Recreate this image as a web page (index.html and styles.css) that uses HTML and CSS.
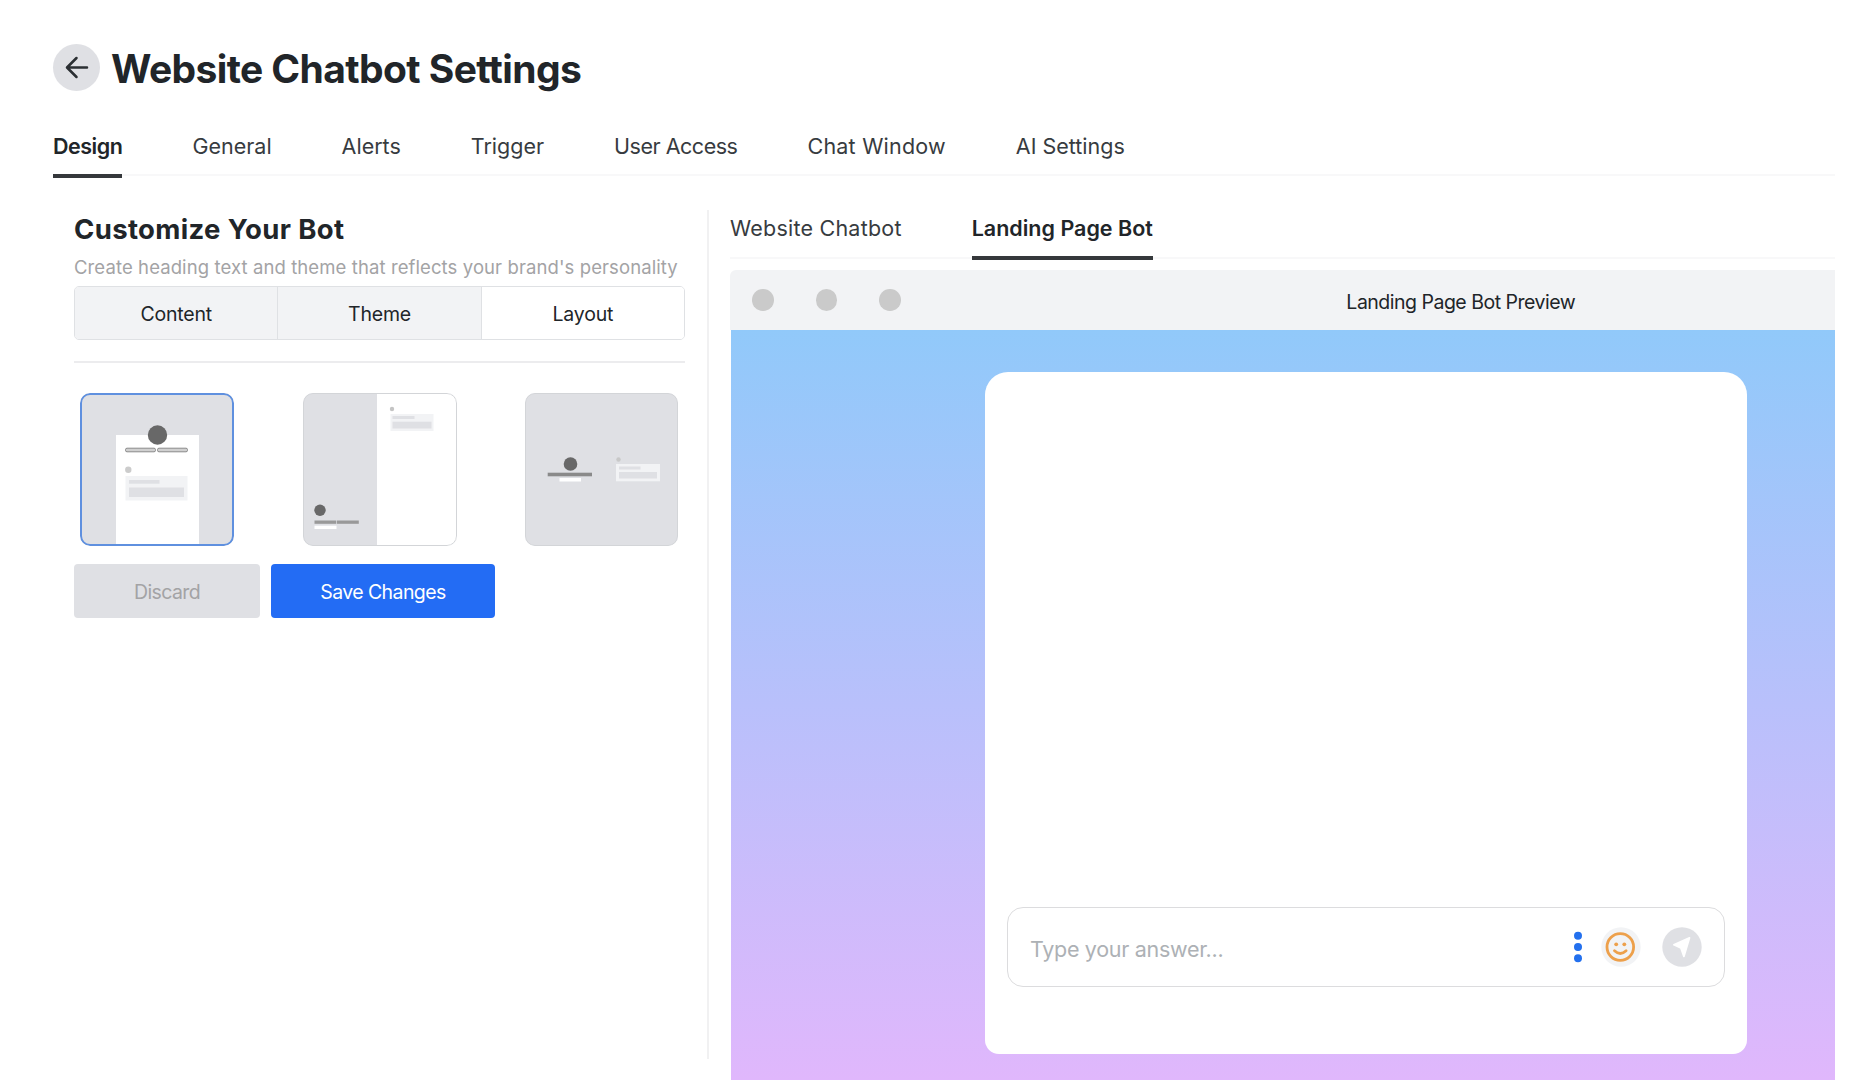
FILE: index.html
```
<!DOCTYPE html>
<html lang="en">
<head>
    <meta charset="UTF-8">
    <title>Website Chatbot Settings</title>
    <link rel="stylesheet" href="styles.css">
</head>
<body>
    <div class="page">
        <header class="header">
            <button type="button" class="back-btn" aria-label="Back">
                <svg width="24" height="24" viewBox="0 0 24 24">
                    <path d="M22 11.500H2.500M11.500 2L2 11.500l9.500 9.500" fill="none" stroke="#2b2f33" stroke-width="2.500" stroke-linecap="round" stroke-linejoin="round"/>
                </svg>
            </button>
            <h1>Website Chatbot Settings</h1>
        </header>

        <nav class="tabs">
            <a class="tab tight active">Design</a>
            <a class="tab">General</a>
            <a class="tab">Alerts</a>
            <a class="tab">Trigger</a>
            <a class="tab tight">User Access</a>
            <a class="tab wide">Chat Window</a>
            <a class="tab">AI Settings</a>
        </nav>

        <main class="content">
            <section class="customize">
                <h2>Customize Your Bot</h2>
                <p class="subtitle">Create heading text and theme that reflects your brand's personality</p>
                <div class="segments">
                    <button type="button" class="segment">Content</button>
                    <button type="button" class="segment">Theme</button>
                    <button type="button" class="segment selected">Layout</button>
                </div>
                <hr>
                <div class="layouts">
                    <!-- centered card layout -->
                    <div class="layout selected">
                        <svg width="154" height="153" viewBox="0 0 154 153">
                            <rect x="36" y="42" width="83" height="110" fill="#fff"/>
                            <circle cx="77.500" cy="42" r="9.700" fill="#686868"/>
                            <rect x="45.500" y="55.200" width="30" height="3.600" rx="1.500" fill="#d0d0d0" stroke="#8a8a8a"/>
                            <rect x="77.500" y="55.200" width="30" height="3.600" rx="1.500" fill="#d0d0d0" stroke="#8a8a8a"/>
                            <circle cx="48.300" cy="76.700" r="3.200" fill="#ccc"/>
                            <rect x="45.500" y="83" width="62" height="24.500" fill="#f2f3f5"/>
                            <rect x="49" y="87" width="30.500" height="3.700" fill="#dfe0e4"/>
                            <rect x="49" y="94.500" width="55" height="9.500" fill="#dfe0e4"/>
                        </svg>
                    </div>
                    <!-- split layout -->
                    <div class="layout">
                        <svg width="154" height="153" viewBox="0 0 154 153">
                            <rect x="74" y="0" width="80" height="153" fill="#fff"/>
                            <circle cx="17" cy="117.300" r="5.700" fill="#686868"/>
                            <rect x="11.500" y="127.500" width="21.800" height="3.300" fill="#999"/>
                            <rect x="34" y="127.500" width="21.800" height="3.300" fill="#999"/>
                            <rect x="11.500" y="132.700" width="22" height="3.300" fill="#fff"/>
                            <circle cx="89" cy="16" r="2.200" fill="#c4c4c4"/>
                            <rect x="87.500" y="21" width="43" height="17" fill="#f2f3f5"/>
                            <rect x="89.500" y="23" width="22" height="3" fill="#dfe0e4"/>
                            <rect x="89.500" y="28.700" width="39" height="6.800" fill="#dfe0e4"/>
                        </svg>
                    </div>
                    <!-- open layout -->
                    <div class="layout layout-open">
                        <svg width="154" height="153" viewBox="0 0 154 153">
                            <circle cx="45.500" cy="71" r="6.800" fill="#686868"/>
                            <rect x="22.700" y="79.700" width="44.300" height="3.600" fill="#8a8a8a"/>
                            <rect x="34.500" y="85" width="21.500" height="3.500" fill="#fff"/>
                            <circle cx="93.500" cy="66.500" r="2.200" fill="#c8c8c8"/>
                            <rect x="91" y="71" width="44" height="17.300" fill="#f2f3f5"/>
                            <rect x="94" y="73.500" width="21.500" height="3" fill="#dfe0e4"/>
                            <rect x="94" y="79" width="38" height="6.500" fill="#dfe0e4"/>
                        </svg>
                    </div>
                </div>
                <div class="actions">
                    <button type="button" class="btn btn-discard">Discard</button>
                    <button type="button" class="btn btn-save">Save Changes</button>
                </div>
            </section>

            <section class="preview">
                <nav class="preview-tabs">
                    <a class="tab wide">Website Chatbot</a>
                    <a class="tab active">Landing Page Bot</a>
                </nav>
                <div class="browser">
                    <div class="browser-bar">
                        <span class="dot"></span>
                        <span class="dot"></span>
                        <span class="dot"></span>
                        <p>Landing Page Bot Preview</p>
                    </div>
                    <div class="browser-body">
                        <div class="chat">
                            <div class="chat-input">
                                <span class="placeholder">Type your answer...</span>
                                <svg class="menu-icon" width="8" height="32" viewBox="0 0 8 32" fill="#2370ee">
                                    <circle cx="4" cy="4.800" r="4"/>
                                    <circle cx="4" cy="16" r="4"/>
                                    <circle cx="4" cy="27.200" r="4"/>
                                </svg>
                                <svg class="emoji-icon" width="40" height="40" viewBox="0 0 40 40">
                                    <circle cx="20" cy="20" r="19.700" fill="#f2f3f5"/>
                                    <circle cx="19.300" cy="20" r="13.300" fill="none" stroke="#eda04b" stroke-width="2.800"/>
                                    <circle cx="15.200" cy="17.300" r="1.900" fill="#eda04b"/>
                                    <circle cx="23.300" cy="17.300" r="1.900" fill="#eda04b"/>
                                    <path d="M13.500 23.800q5.800 5.400 11.600 0" fill="none" stroke="#eda04b" stroke-width="2.800" stroke-linecap="round"/>
                                </svg>
                                <svg class="send-icon" width="40" height="40" viewBox="0 0 40 40">
                                    <circle cx="20" cy="20" r="19.700" fill="#dfe0e4"/>
                                    <path d="M27.500 10.800L11.900 17.800l7 3.200 3 8.400z" fill="#fff" stroke="#fff" stroke-width="1.800" stroke-linejoin="round"/>
                                </svg>
                            </div>
                        </div>
                    </div>
                </div>
            </section>
        </main>
    </div>
</body>
</html>
```
FILE: styles.css
```
* {
    box-sizing: border-box;
}
body {
    margin: 0;
    background-color: #fff;
    color: #212529;
    font-family: Inter, "Liberation Sans", sans-serif;
    overflow: hidden;
}
h1, h2, p {
    margin: 0;
}
button {
    font-family: inherit;
    border: none;
    padding: 0;
}
.page {
    height: 1080px;
    padding: 44px 31px 0 53px;
    display: flex;
    flex-direction: column;
}

.header {
    display: flex;
    align-items: center;
    gap: 11px;
    height: 47px;
}
.back-btn {
    width: 47px;
    height: 47px;
    border-radius: 50%;
    background-color: #dfe0e4;
    display: flex;
    align-items: center;
    justify-content: center;
}
.header h1 {
    font-size: 39px;
    font-weight: 700;
    line-height: 47px;
    padding-top: 2px;
    letter-spacing: -0.6px;
    white-space: nowrap;
}

.tabs, .preview-tabs {
    display: flex;
    gap: 70px;
    flex-shrink: 0;
}
.tabs {
    height: 85px;
    padding-top: 40px;
    border-bottom: 2px solid #f8f8f9;
}
.tab {
    height: 47px;
    font-size: 21.5px;
    line-height: 30px;
    white-space: nowrap;
    color: #373b40;
}
.tab.tight {
    letter-spacing: -0.48px;
}
.tab.wide {
    letter-spacing: 0.22px;
}
.tab.active {
    font-weight: 600;
    color: #212529;
    border-bottom: 4px solid #35383b;
}

.content {
    flex: 1;
    display: flex;
    padding-top: 34px;
}
.customize {
    width: 656px;
    height: 849px;
    padding: 2px 22px 0 21px;
    border-right: 2px solid #f1f1f2;
}
.customize h2 {
    font-size: 27.5px;
    line-height: 34px;
    font-weight: 700;
    letter-spacing: 0.35px;
    white-space: nowrap;
}
.subtitle {
    font-size: 18.5px;
    line-height: 24px;
    margin-top: 9px;
    letter-spacing: 0.1px;
    color: #a3a3a5;
    white-space: nowrap;
}
.segments {
    display: flex;
    height: 54px;
    margin-top: 7px;
    border: 1px solid #dfe1e4;
    border-radius: 5px;
    overflow: hidden;
}
.segment {
    flex: 1;
    padding-top: 2px;
    font-size: 19.5px;
    letter-spacing: -0.2px;
    color: #212529;
    background-color: #f2f3f5;
    border-right: 1px solid #dfe1e4;
}
.segment.selected {
    background-color: #fff;
    border-right: none;
}
hr {
    height: 2px;
    margin: 21px 0 0;
    border: none;
    background-color: #ececee;
}
.layouts {
    display: flex;
    justify-content: space-between;
    padding: 0 7px 0 6px;
    margin-top: 30px;
}
.layout {
    width: 154px;
    height: 153px;
    border-radius: 10px;
    background-color: #dfe0e4;
    overflow: hidden;
    position: relative;
}
.layout-open {
    width: 153px;
}
.layout svg {
    display: block;
}
/* frame stays above the drawing */
.layout::after {
    content: "";
    position: absolute;
    inset: 0;
    border: 1.5px solid #d3d5d8;
    border-radius: 10px;
}
.layout.selected::after {
    border: 2px solid #5f90df;
}
.actions {
    display: flex;
    gap: 11px;
    margin-top: 18px;
}
.btn {
    height: 54px;
    padding-top: 2px;
    border-radius: 4px;
    font-size: 19.5px;
    letter-spacing: -0.6px;
}
.btn-discard {
    width: 186px;
    background-color: #dfe0e4;
    color: #a3a3a5;
}
.btn-save {
    width: 224px;
    background-color: #236cf4;
    color: #fff;
}

.preview {
    flex: 1;
    padding-left: 21px;
    display: flex;
    flex-direction: column;
}
.preview-tabs {
    height: 49px;
    padding-top: 2px;
    border-bottom: 2px solid #f8f8f9;
}
.preview-tabs .tab {
    height: 48px;
    line-height: 32px;
}
.browser {
    flex: 1;
    margin-top: 11px;
    display: flex;
    flex-direction: column;
}
.browser-bar {
    height: 60px;
    padding-left: 22px;
    border-radius: 6px 0 0 0;
    background-color: #f2f3f5;
    display: flex;
    align-items: center;
    gap: 42px;
}
.browser-bar .dot {
    width: 21.5px;
    height: 21.5px;
    border-radius: 50%;
    background-color: #cacaca;
}
.browser-bar p {
    flex: 1;
    padding: 3px 0 0 144px;
    text-align: center;
    font-size: 19.5px;
    letter-spacing: -0.5px;
}
.browser-body {
    flex: 1;
    padding: 42px 88px 26px 254px;
    margin-left: 1px;
    background: linear-gradient(#91c9fa, #e0b7fc);
    display: flex;
}
.chat {
    flex: 1;
    padding: 0 22px 67px;
    border-radius: 23px 23px 14px 14px;
    background-color: #fff;
    display: flex;
    flex-direction: column;
    justify-content: flex-end;
}
.chat-input {
    height: 80px;
    padding: 0 22px;
    border: 1.5px solid #dcdcde;
    border-radius: 16px;
    display: flex;
    align-items: center;
}
.placeholder {
    flex: 1;
    font-size: 21.5px;
    padding-top: 4px;
    letter-spacing: -0.3px;
    color: #adb1b5;
}
.emoji-icon {
    margin-left: 19px;
}
.send-icon {
    margin-left: 21px;
}
```
